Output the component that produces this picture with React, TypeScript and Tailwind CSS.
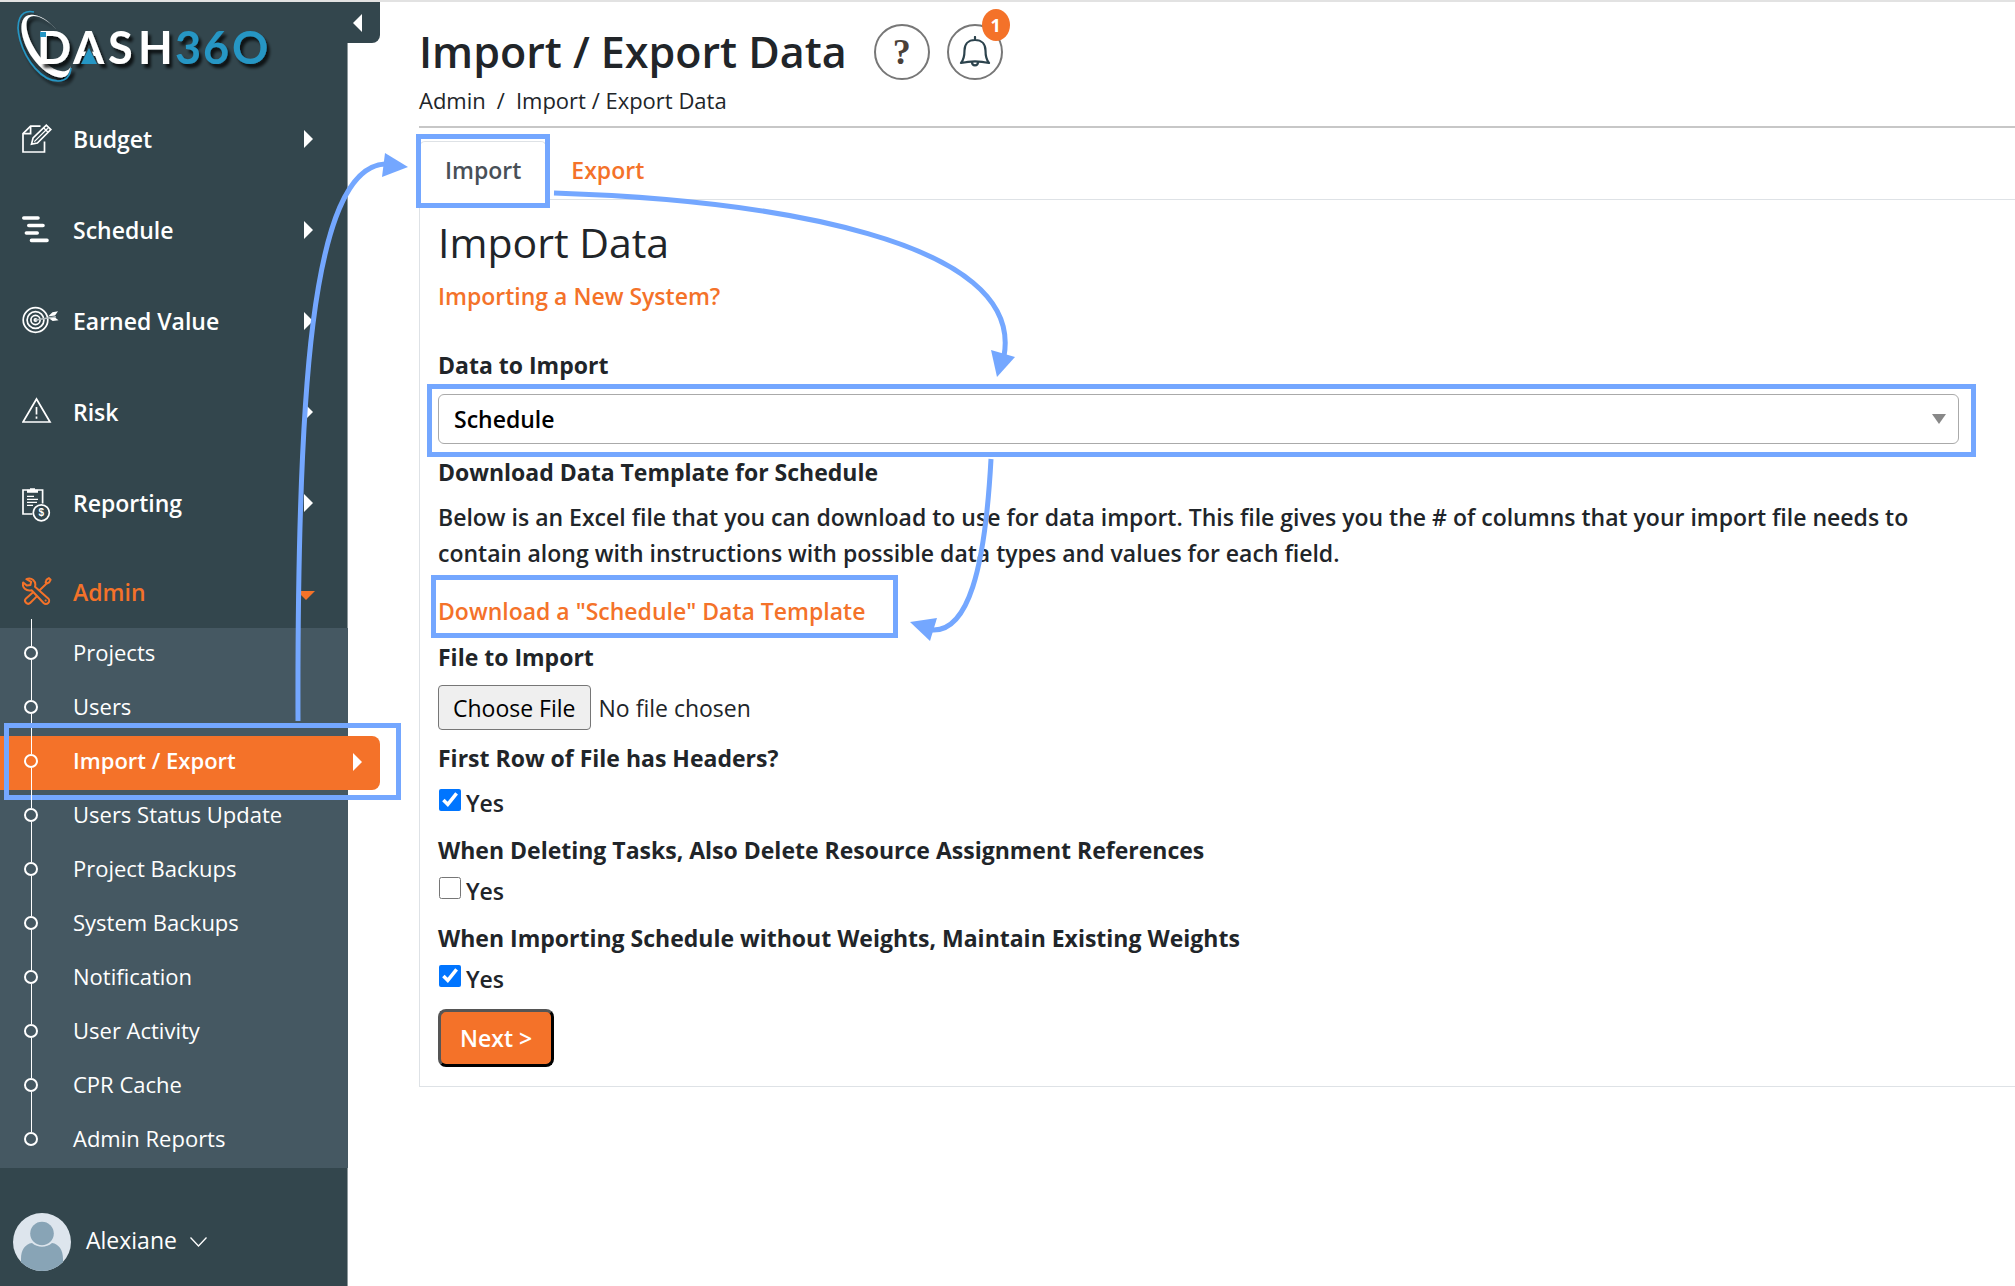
import { useState, type ReactNode } from "react";

type NavItem = {
  label: string;
  icon: ReactNode;
};

const iconProps = {
  width: 38,
  height: 34,
  viewBox: "0 0 38 34",
  fill: "none",
  stroke: "currentColor",
  strokeWidth: 1.7,
  "aria-hidden": true,
} as const;

function BudgetIcon() {
  return (
    <svg {...iconProps}>
      <path d="M18.5 4.2H8.6L1 11.6V30h21.5V19.5" />
      <path d="M8.6 4.5v7.2H1.2" />
      <path d="M9.5 22.2l1.6-6.3L24.3 3.2l4.5 4.4L15.4 21z" />
      <path d="M12.3 19.6L25.8 6.2M21.6 5.8l4.4 4.4" strokeWidth="1.3" />
    </svg>
  );
}

function ScheduleIcon() {
  return (
    <svg {...iconProps} strokeWidth="3.6" strokeLinecap="round">
      <path d="M1.8 5H16M6.8 12.5H21M4.4 20H15.2M9.5 27.4H25" />
    </svg>
  );
}

function TargetIcon() {
  return (
    <svg {...iconProps}>
      <circle cx="13.5" cy="16" r="12.3" />
      <circle cx="13.5" cy="16" r="8.4" />
      <circle cx="13.5" cy="16" r="4.6" />
      <circle cx="13.5" cy="16" r="1.2" fill="currentColor" />
      <path d="M13.5 16L34 12.8" stroke="#b4bdc0" strokeWidth="1.6" />
      <path d="M26 12.6l4.5-4.4 5.5-.9-3 4.2zM27.2 14.500l5.8-1.100 3.5 2.8-5.8.8z" fill="currentColor" stroke="none" />
    </svg>
  );
}

function RiskIcon() {
  return (
    <svg {...iconProps}>
      <path d="M14.5 4L28 27H1z" />
      <path d="M14.5 12v7.4M14.5 21.6v2.2" />
    </svg>
  );
}

function ReportingIcon() {
  return (
    <svg {...iconProps} className="overflow-visible">
      <path d="M10.5 28H1V4h19.6v13.5" />
      <path d="M5 3.8h3V2.2h5v1.6h3v3H5z" fill="currentColor" stroke="none" />
      <path d="M5 10.4h7M5 13.4h11M5 16.4h10M5 19.4h6" strokeWidth="1.1" />
      <circle cx="19.3" cy="26.8" r="8" />
      <text
        x="19.3"
        y="30.4"
        textAnchor="middle"
        fill="currentColor"
        stroke="none"
        className="font-['Liberation_Sans'] text-[10px] font-bold"
      >
        $
      </text>
    </svg>
  );
}

function AdminIcon() {
  return (
    <svg {...iconProps} strokeWidth="2" strokeLinejoin="round" strokeLinecap="round">
      <path d="M4.4 4.2C9.5 2 14.6 6 13 11.8l13.2 11.6a3.2 3.2 0 0 1-4.6 4.6L9.6 15.2C4.4 16.6-.4 12.6 1.2 7.4l3.6 3.2 3.6-.7.8-3.1z" />
      <path d="M17.6 15.2l7-6.6M23.6 7.4l1-2.8 2.4-1.5 1.6 1.6-1.4 2.6-2.4 1.2z" />
      <path d="M10.8 17.4l-6.8 6a3.1 3.1 0 0 0 4.4 4.4l6.4-6.4" />
      <path d="M23.6 25.4h.1" />
    </svg>
  );
}

const navItems: NavItem[] = [
  { label: "Budget", icon: <BudgetIcon /> },
  { label: "Schedule", icon: <ScheduleIcon /> },
  { label: "Earned Value", icon: <TargetIcon /> },
  { label: "Risk", icon: <RiskIcon /> },
  { label: "Reporting", icon: <ReportingIcon /> },
];

const adminItems = [
  "Projects",
  "Users",
  "Import / Export",
  "Users Status Update",
  "Project Backups",
  "System Backups",
  "Notification",
  "User Activity",
  "CPR Cache",
  "Admin Reports",
];

const ACTIVE_ITEM = "Import / Export";

function CaretRight() {
  return (
    <svg width="9" height="18" viewBox="0 0 9 18" fill="currentColor" aria-hidden="true">
      <path d="M0 0l9 9-9 9z" />
    </svg>
  );
}

function Logo() {
  return (
    <svg width="280" height="88" viewBox="0 0 280 88" role="img" aria-label="DASH360">
      <defs>
        <filter id="logo-shadow" x="-10%" y="-10%" width="130%" height="130%">
          <feDropShadow dx="3" dy="4" stdDeviation="1.5" floodColor="#000" floodOpacity="0.75" />
        </filter>
      </defs>
      <g filter="url(#logo-shadow)">
        <path
          d="M34 12C20 9 15 22 20 40c6 21 22 41 38 41 8 0 12-5 13-13"
          fill="none"
          stroke="#2596c4"
          strokeWidth="1.6"
        />
        <path
          d="M57 30C46 17 32 11 25 17c-7 7-3 25 7 40 11 16 26 24 34 19 3-2 4-6 5-11-1 5-5 7-10 6-9-1-21-11-28-25-7-13-9-26-3-29 5-3 16 1 27 13z"
          fill="#fff"
        />
      </g>
      <g filter="url(#logo-shadow)" fill="#fff" className="font-['Lato'] text-[45px] font-bold">
        <text y="64" x="37 73 108 138">
          DASH
        </text>
        <text y="64" x="175 203 232" fill="#2596c4">
          36O
        </text>
      </g>
      <path d="M89 44l8 20H81z" fill="#33464d" />
      <path d="M89 48l8 16H81z" fill="#2596c4" />
      <path d="M40 32h6v5h-6z" fill="#2596c4" />
    </svg>
  );
}

function Sidebar() {
  return (
    <aside className="relative z-10 flex w-[348px] shrink-0 flex-col border-r border-[#8d989c] bg-[#33464d] text-white">
      <button
        type="button"
        aria-label="Collapse menu"
        className="absolute top-0 -right-[33px] flex h-[41px] w-10 items-center rounded-br-lg bg-[#33464d] pl-[13px]"
      >
        <svg width="9" height="18" viewBox="0 0 9 18" fill="currentColor" aria-hidden="true">
          <path d="M9 0L0 9l9 9z" />
        </svg>
      </button>

      <div className="h-[82px]">
        <div className="-mt-[2px]">
          <Logo />
        </div>
      </div>

      <nav>
        {navItems.map((item) => (
          <a
            key={item.label}
            href="#"
            className="flex h-[91px] items-center pt-[37px] pr-[34px] pb-[18px] pl-[22px] text-[23px]/9 font-semibold"
          >
            <span className="w-[51px]">{item.icon}</span>
            <span className="flex-1">{item.label}</span>
            <CaretRight />
          </a>
        ))}
        <a
          href="#"
          className="flex h-[89px] items-center pt-[35px] pr-[32px] pb-[18px] pl-[22px] text-[23px]/9 font-semibold text-[#f47229]"
        >
          <span className="w-[51px]">
            <AdminIcon />
          </span>
          <span className="flex-1">Admin</span>
          <svg width="18" height="16" viewBox="0 0 18 16" fill="currentColor" aria-hidden="true">
            <path d="M0 7h18l-9 9z" />
          </svg>
        </a>

        <ul className="-mr-px bg-[#455862]">
          {adminItems.map((label, i) => {
            const active = label === ACTIVE_ITEM;
            return (
              <li key={label} className="relative">
                <a
                  href="#"
                  className={
                    active
                      ? "relative -mr-8 flex h-[54px] items-center justify-between rounded-r-lg bg-[#f47229] pr-[18px] pb-1.5 pl-[73px] text-[22px] font-semibold"
                      : "flex h-[54px] items-center pb-1.5 pl-[73px] text-[22px]"
                  }
                >
                  {label}
                  {active && (
                    <span className="pt-1">
                      <CaretRight />
                    </span>
                  )}
                </a>
                <span
                  className={
                    i === 0
                      ? "absolute -top-[9px] left-[31px] h-[27px] w-px bg-white"
                      : "absolute -top-[22px] left-[31px] h-10 w-px bg-white"
                  }
                />
                <span className="absolute top-[18px] left-6 size-[14px] rounded-full border-2 border-white" />
                {active && (
                  <span className="pointer-events-none absolute -top-[13px] -right-[53px] -bottom-[10px] left-1 border-[5px] border-[#74a7ff]" />
                )}
              </li>
            );
          })}
        </ul>
      </nav>

      <button type="button" className="mt-[45px] flex items-center pl-[13px] text-[23px]/9">
        <svg width="58" height="58" viewBox="0 0 58 58" aria-hidden="true">
          <clipPath id="avatar-clip">
            <circle cx="29" cy="29" r="29" />
          </clipPath>
          <g clipPath="url(#avatar-clip)">
            <rect width="58" height="58" fill="#dde5ed" />
            <circle cx="29" cy="20.5" r="11.8" fill="#88a4b6" />
            <path d="M8 58V46c0-9 4-15 11-16 6 5 14 5 20 0 7 1 11 7 11 16v12z" fill="#88a4b6" />
          </g>
        </svg>
        <span className="ml-[15px] pb-1">Alexiane</span>
        <svg
          className="ml-[13px]"
          width="17"
          height="10"
          viewBox="0 0 17 10"
          fill="none"
          stroke="currentColor"
          strokeWidth="1.3"
          aria-hidden="true"
        >
          <path d="M.5.5l8 8.5 8-8.5" />
        </svg>
      </button>
    </aside>
  );
}

type YesFieldProps = {
  id: string;
  question: string;
  defaultChecked?: boolean;
  className?: string;
};

function YesField({ id, question, defaultChecked, className }: YesFieldProps) {
  return (
    <fieldset className={className}>
      <legend className="font-bold">{question}</legend>
      <div className="mt-[5px] flex items-start gap-[5px]">
        <input
          id={id}
          type="checkbox"
          defaultChecked={defaultChecked}
          className="mt-1 ml-px size-[22px] accent-[#0075ff]"
        />
        <label htmlFor={id}>Yes</label>
      </div>
    </fieldset>
  );
}

function Arrows() {
  return (
    <svg
      className="pointer-events-none absolute -top-[2px] left-0 z-20"
      width="1040"
      height="740"
      viewBox="0 0 1040 740"
      fill="none"
      stroke="#74a7ff"
      strokeWidth="5"
      aria-hidden="true"
    >
      <path d="M298 721C297 400 310 168 385 164" />
      <path d="M554 193C770 200 1025 240 1004 356" />
      <path d="M991 459C985 570 968 632 932 630" />
      <g fill="#74a7ff" stroke="none">
        <path d="M385 153l23 14-26 10z" />
        <path d="M991 350l24 7-18 20z" />
        <path d="M910 622l27-4-7 23z" />
      </g>
    </svg>
  );
}

export default function App() {
  const [dataType, setDataType] = useState("Schedule");

  return (
    <div className="relative flex min-h-screen overflow-hidden border-t-2 border-[#e2e2e2] bg-white font-['Open_Sans',sans-serif] text-[#212529]">
      <Sidebar />

      <main className="min-w-0 flex-1 pl-[71px]">
        <header className="border-b-2 border-[#c7c7c7] pb-[10px]">
          <div className="flex items-center pt-[20px]">
            <h1 className="text-[43px]/[60px] font-semibold">Import / Export Data</h1>
            <button
              type="button"
              aria-label="Help"
              className="ml-[27px] flex size-14 items-center justify-center rounded-full border-2 border-[#777] font-['Liberation_Serif',serif] text-4xl font-bold text-[#4a4039]"
            >
              ?
            </button>
            <button
              type="button"
              aria-label="Notifications"
              className="relative ml-[17px] flex size-14 items-center justify-center rounded-full border-2 border-[#777] text-[#2c434d]"
            >
              <svg
                width="32"
                height="32"
                viewBox="0 0 32 32"
                fill="none"
                stroke="currentColor"
                strokeWidth="2.2"
                strokeLinejoin="round"
                strokeLinecap="round"
                aria-hidden="true"
              >
                <path d="M16 1v3M16 4C9 4 5.500 8.500 5.500 14.500c0 6-1 9.500-3.500 12.500 9-2.200 19-2.200 28 0-2.500-3-3.500-6.500-3.500-12.500C26.500 8.500 23 4 16 4z" />
                <path d="M13 26c0 4.500 6 4.500 6 0" />
              </svg>
              <span className="absolute -top-[17px] -right-[9px] flex h-8 w-7 items-center justify-center rounded-[50%] bg-[#f47229] text-lg font-bold text-white">
                1
              </span>
            </button>
          </div>
          <nav aria-label="Breadcrumb" className="mt-[2px] flex gap-[11px] text-[22px]/[32px]">
            <a href="#">Admin</a>
            <span>/</span>
            <span>Import / Export Data</span>
          </nav>
        </header>

        <div role="tablist" className="mt-[13px] flex text-[23px]/9 font-semibold">
          <button
            type="button"
            role="tab"
            aria-selected="true"
            className="relative z-10 -mb-px rounded-t-md border border-b-0 border-[#dee2e6] bg-white px-[25px] pt-[10px] pb-3 text-[#495057]"
          >
            Import
            <span className="pointer-events-none absolute -inset-x-[4px] -top-2 -bottom-2 border-[5px] border-[#74a7ff]" />
          </button>
          <button type="button" role="tab" aria-selected="false" className="px-6 pt-[11px] pb-[11px] text-[#f47229]">
            Export
          </button>
        </div>

        <form
          className="-mr-2 border border-[#dee2e6] pr-[63px] pb-[19px] pl-[18px] text-[23px]/9 font-semibold"
          onSubmit={(e) => e.preventDefault()}
        >
          <h2 className="pt-3 text-[41px]/[60px] font-normal">Import Data</h2>
          <a href="#" className="mt-1.5 block w-fit text-[#f47229]">
            Importing a New System?
          </a>

          <label htmlFor="data-type" className="mt-[33px] block font-bold">
            Data to Import
          </label>
          <div className="relative mt-[11px]">
            <select
              id="data-type"
              value={dataType}
              onChange={(e) => setDataType(e.target.value)}
              className="block h-[50px] w-full appearance-none rounded-md border border-[#aaa] bg-white px-[15px] text-black"
            >
              <option>Schedule</option>
              <option>Budget</option>
              <option>Risk</option>
            </select>
            <svg
              className="pointer-events-none absolute top-5 right-[13px]"
              width="14"
              height="10"
              viewBox="0 0 14 10"
              fill="#888"
              aria-hidden="true"
            >
              <path d="M0 0h14L7 10z" />
            </svg>
            <span className="pointer-events-none absolute -top-[10px] -right-[17px] -bottom-[13px] -left-[11px] border-[5px] border-[#74a7ff]" />
          </div>

          <h3 className="mt-[10px] font-bold">Download Data Template for {dataType}</h3>
          <p className="mt-[9px]">
            Below is an Excel file that you can download to use for data import. This file gives you the # of columns
            that your import file needs to contain along with instructions with possible data types and values for each
            field.
          </p>
          <a href="#" className="relative mt-[22px] block w-fit text-[#f47229]">
            Download a "{dataType}" Data Template
            <span className="pointer-events-none absolute -top-[18px] -right-[33px] -bottom-[9px] -left-[7px] border-[5px] border-[#74a7ff]" />
          </a>

          <label htmlFor="import-file" className="mt-[10px] block font-bold">
            File to Import
          </label>
          <input
            id="import-file"
            type="file"
            className="mt-[10px] block w-full font-normal file:mr-2 file:h-[45px] file:rounded-[4px] file:border file:border-solid file:border-[#767676] file:bg-[#efefef] file:px-[14px] file:text-black"
          />

          <YesField
            id="has-headers"
            question="First Row of File has Headers?"
            defaultChecked
            className="mt-[10px] [&>div]:mt-[9px]"
          />
          <YesField
            id="delete-refs"
            question="When Deleting Tasks, Also Delete Resource Assignment References"
            className="mt-[11px]"
          />
          <YesField
            id="keep-weights"
            question="When Importing Schedule without Weights, Maintain Existing Weights"
            defaultChecked
            className="mt-[11px]"
          />

          <button
            type="submit"
            className="mt-3 block h-[58px] rounded-lg border-[3px] border-t-[#555] border-r-black border-b-black border-l-[#555] bg-[#f47229] px-[19px] text-white"
          >
            Next &gt;
          </button>
        </form>
      </main>

      <Arrows />
    </div>
  );
}
